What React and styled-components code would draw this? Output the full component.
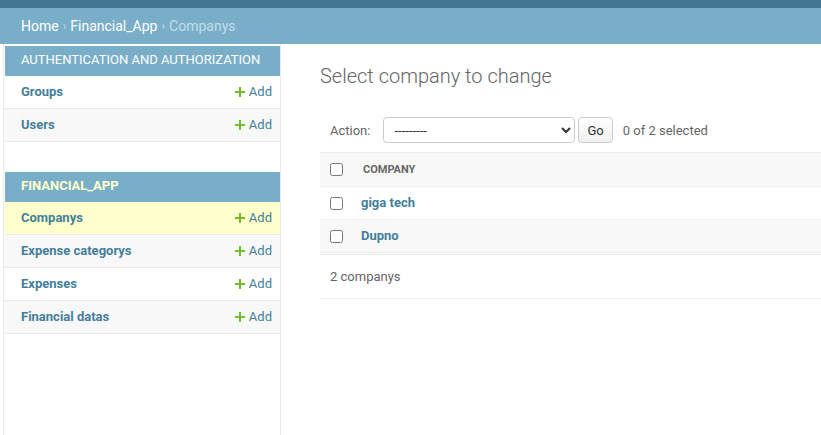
import React from 'react';
import styled, { createGlobalStyle } from 'styled-components';

const GlobalStyle = createGlobalStyle`
  html, body {
    margin: 0;
    padding: 0;
    background: #fff;
  }
  body {
    font-family: Roboto, "Liberation Sans", Arial, sans-serif;
    font-size: 14px;
    color: #333;
  }
  * {
    box-sizing: border-box;
  }
`;

const models = [
  { app: 'Authentication and Authorization', current: false, items: ['Groups', 'Users'] },
  { app: 'Financial_App', current: true, items: ['Companys', 'Expense categorys', 'Expenses', 'Financial datas'] },
];

const companies = ['giga tech', 'Dupno'];

const PlusIcon = () => (
  <svg width="10" height="10" viewBox="0 0 10 10" aria-hidden="true">
    <path d="M4 0h2v4h4v2H6v4H4V6H0V4h4z" fill="#70bf2b" />
  </svg>
);

const App = () => {
  return (
    <>
      <GlobalStyle />
      <Header />
      <Breadcrumbs>
        <Crumb href="#">Home</Crumb>
        <Sep>›</Sep>
        <Crumb href="#">Financial_App</Crumb>
        <Sep>›</Sep>
        <Current>Companys</Current>
      </Breadcrumbs>
      <Main>
        <Sidebar>
          {models.map(group => (
            <Module key={group.app}>
              <Caption $current={group.current}>{group.app}</Caption>
              {group.items.map((item, index) => (
                <ModelRow
                  key={item}
                  $alt={index % 2 === 1}
                  $current={group.current && item === 'Companys'}
                >
                  <ModelLink href="#">{item}</ModelLink>
                  <AddLink href="#">
                    <PlusIcon />
                    Add
                  </AddLink>
                </ModelRow>
              ))}
            </Module>
          ))}
        </Sidebar>
        <Content>
          <Title>Select company to change</Title>
          <Actions>
            <ActionLabel>Action:</ActionLabel>
            <ActionSelect defaultValue="">
              <option value="">---------</option>
              <option value="delete">Delete selected companys</option>
            </ActionSelect>
            <GoButton type="button">Go</GoButton>
            <Counter>0 of 2 selected</Counter>
          </Actions>
          <Table>
            <thead>
              <tr>
                <CheckCell as="th">
                  <Check type="checkbox" />
                </CheckCell>
                <HeadCell>
                  <HeadText>Company</HeadText>
                </HeadCell>
              </tr>
            </thead>
            <tbody>
              {companies.map((name, index) => (
                <Row key={name} $alt={index % 2 === 1}>
                  <CheckCell>
                    <Check type="checkbox" />
                  </CheckCell>
                  <Cell>
                    <RowLink href="#">{name}</RowLink>
                  </Cell>
                </Row>
              ))}
            </tbody>
          </Table>
          <Paginator>2 companys</Paginator>
        </Content>
      </Main>
    </>
  );
};

const Header = styled.div`
  height: 8px;
  background: #417690;
`;

const Breadcrumbs = styled.div`
  display: flex;
  align-items: center;
  height: 36px;
  padding: 0 21px;
  background: #79aec8;
  color: #c4dce8;
  font-size: 14px;
  line-height: 16px;
`;

const Crumb = styled.a`
  color: #fff;
  text-decoration: none;
`;

const Sep = styled.span`
  color: #c4dce8;
  margin: 0 4px;
  font-size: 12px;
`;

const Current = styled.span`
  color: #c4dce8;
`;

const Main = styled.div`
  display: flex;
  min-height: calc(100vh - 44px);
`;

const Sidebar = styled.nav`
  flex: 0 0 auto;
  width: 278px;
  margin-left: 3px;
  padding: 2px 0 0 1px;
  border-left: 1px solid #eaeaea;
  border-right: 1px solid #eaeaea;
`;

const Module = styled.div`
  margin-bottom: 30px;
`;

const Caption = styled.div`
  height: 30px;
  padding: 7px 16px 9px;
  background: #79aec8;
  color: ${p => (p.$current ? '#ffc' : '#fff')};
  font-size: 13px;
  line-height: 14px;
  font-weight: ${p => (p.$current ? 700 : 400)};
  letter-spacing: 0;
  white-space: nowrap;
  text-transform: uppercase;
`;

const ModelRow = styled.div`
  display: flex;
  align-items: center;
  justify-content: space-between;
  height: 33px;
  padding: 0 8px 1px 16px;
  border-bottom: 1px solid #e8e8e8;
  background: ${p => (p.$current ? '#ffffcc' : p.$alt ? '#f8f8f8' : '#fff')};
  font-size: 13px;
`;

const ModelLink = styled.a`
  color: #447e9b;
  font-weight: 700;
  text-decoration: none;
`;

const AddLink = styled.a`
  display: flex;
  align-items: center;
  gap: 4px;
  color: #447e9b;
  text-decoration: none;
`;

const Content = styled.main`
  flex: 1;
  min-width: 0;
  padding: 20px 0 0 39px;
`;

const Title = styled.h1`
  margin: 0 0 20px;
  font-size: 20px;
  line-height: 24px;
  font-weight: 300;
  color: #666;
`;

const Actions = styled.div`
  display: flex;
  align-items: center;
  height: 44px;
  padding: 0 10px;
  font-size: 13px;
  color: #666;
`;

const ActionLabel = styled.label`
  margin-right: 13px;
`;

const ActionSelect = styled.select`
  width: 192px;
  height: 26px;
  padding: 0 6px;
  border: 1px solid #ccc;
  border-radius: 4px;
  background: #fff;
  color: #333;
  font-family: inherit;
  font-size: 13px;
`;

const GoButton = styled.button`
  height: 26px;
  margin-left: 3px;
  padding: 0 8px;
  border: 1px solid #ccc;
  border-radius: 4px;
  background: linear-gradient(#fff, #f0f0f0);
  color: #333;
  font-family: inherit;
  font-size: 13px;
`;

const Counter = styled.span`
  margin-left: 10px;
`;

const Table = styled.table`
  width: 100%;
  border-collapse: collapse;
  font-size: 13px;
  line-height: 16px;
`;

const Row = styled.tr`
  background: ${p => (p.$alt ? '#f8f8f8' : '#fff')};
`;

const CheckCell = styled.td`
  width: 31px;
  height: 33px;
  padding: 8px 8px 8px 10px;
  border-bottom: 1px solid #eee;
  vertical-align: middle;
  text-align: left;

  thead & {
    background: #f8f8f8;
    border-top: 1px solid #eee;
  }
`;

const Check = styled.input`
  display: block;
  margin: 0;
  width: 13px;
  height: 13px;
`;

const HeadCell = styled.th`
  padding: 8px 10px;
  background: #f8f8f8;
  border-top: 1px solid #eee;
  border-bottom: 1px solid #eee;
  text-align: left;
`;

const HeadText = styled.span`
  padding-left: 2px;
  font-size: 11px;
  font-weight: 700;
  text-transform: uppercase;
  color: #666;
`;

const Cell = styled.td`
  padding: 8px 10px;
  border-bottom: 1px solid #eee;
`;

const RowLink = styled.a`
  color: #447e9b;
  font-weight: 700;
  text-decoration: none;
`;

const Paginator = styled.div`
  margin-top: 1px;
  padding: 13px 10px;
  border-top: 1px solid #eee;
  border-bottom: 1px solid #eee;
  font-size: 13px;
  line-height: 17px;
  color: #666;
`;

export default App;
